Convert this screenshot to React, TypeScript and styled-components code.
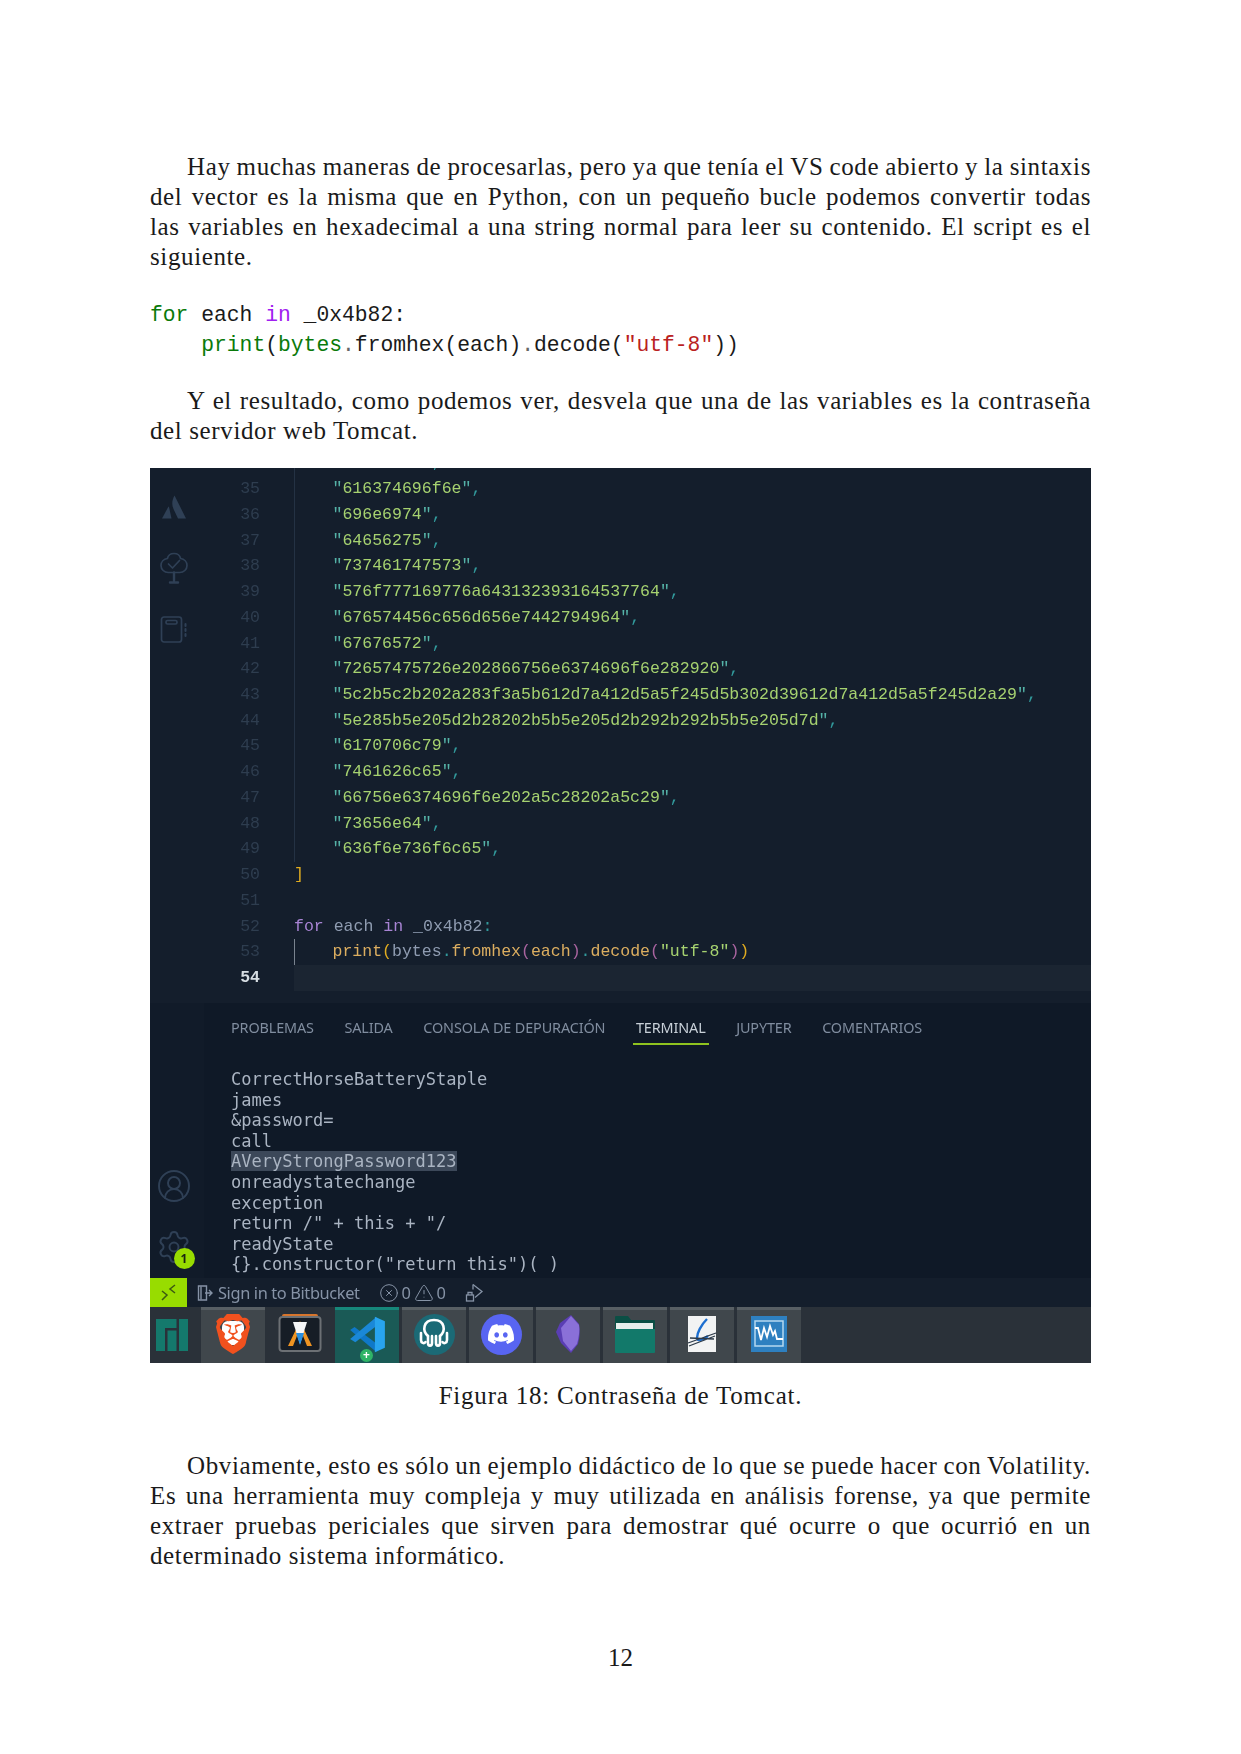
import React from "react";
import styled, { createGlobalStyle } from "styled-components";
import { CircleUserRound, Settings, CircleX, TriangleAlert } from "lucide-react";
import { SiBrave, SiDiscord, SiManjaro } from "react-icons/si";

const Global = createGlobalStyle`
  html, body { margin: 0; padding: 0; background: #fff; }
  * { box-sizing: border-box; }
`;

const Page = styled.main`
  width: 1241px;
  height: 1754px;
  padding: 152px 150px 0;
  background: #fff;
  color: #1a1a1a;
  font-family: "Liberation Serif", serif;
  font-size: 25px;
  overflow: hidden;
`;

const Paragraph = styled.section<{ $top?: number }>`
  margin-top: ${(p) => p.$top ?? 0}px;
`;

const TextLine = styled.div<{ $indent?: boolean; $last?: boolean }>`
  height: 30px;
  line-height: 30px;
  letter-spacing: 0.62px;
  word-spacing: ${(p) => (p.$last ? 0 : -2.5)}px;
  text-align: ${(p) => (p.$last ? "left" : "justify")};
  text-align-last: ${(p) => (p.$last ? "left" : "justify")};
  padding-left: ${(p) => (p.$indent ? 37 : 0)}px;
`;

const Listing = styled.pre`
  margin: 28px 0 0;
  font-family: "Liberation Mono", monospace;
  font-size: 21.33px;
  line-height: 30px;
  color: #1a1a1a;
`;

const Tok = styled.span<{ $c: string }>`
  color: ${(p) => p.$c};
`;

const Caption = styled.div`
  margin-top: 18px;
  height: 30px;
  line-height: 30px;
  text-align: center;
  letter-spacing: 0.78px;
`;

const PageNumber = styled.div`
  margin-top: 72px;
  height: 30px;
  line-height: 30px;
  text-align: center;
`;

/* ---------- screenshot ---------- */

const Shot = styled.figure`
  margin: 22px 0 0;
  width: 941px;
  height: 895px;
  display: flex;
  flex-direction: column;
  overflow: hidden;
  background: #141e2c;
  filter: blur(0.45px);
`;

const Workbench = styled.div`
  display: flex;
  height: 810px;
`;

const Activity = styled.nav`
  width: 54px;
  flex: none;
  display: flex;
  flex-direction: column;
  justify-content: space-between;
  padding: 8px 6px 0 0;
  background: linear-gradient(#141e2c 0, #141e2c 66%, #111b29 66%, #111b29 100%);
  color: #2f4056;
`;

const ActivityGroup = styled.div`
  display: flex;
  flex-direction: column;
`;

const ActivitySlot = styled.div`
  position: relative;
  height: 61.5px;
  display: flex;
  align-items: center;
  justify-content: center;
`;

const Badge = styled.span`
  position: absolute;
  left: 23.5px;
  top: 31.5px;
  width: 21px;
  height: 21px;
  border-radius: 50%;
  background: #98dc00;
  color: #1a2410;
  font: 700 12px/21px "Noto Sans", sans-serif;
  text-align: center;
`;

const Main = styled.div`
  flex: 1;
  min-width: 0;
  display: flex;
  flex-direction: column;
`;

const Editor = styled.div`
  flex: 1;
  min-height: 0;
  overflow: hidden;
  background: #141e2c;
  font-family: "Liberation Mono", monospace;
  font-size: 16.55px;
`;

const EditorInner = styled.div`
  margin-top: -17.6px;
`;

const CodeRow = styled.div`
  display: flex;
  height: 25.74px;
  line-height: 25.74px;
  white-space: pre;
`;

const LineNo = styled.span<{ $active?: boolean }>`
  width: 56px;
  flex: none;
  text-align: right;
  color: ${(p) => (p.$active ? "#d6dde2" : "#2e3d4f")};
  font-weight: ${(p) => (p.$active ? 700 : 400)};
`;

const CodeCell = styled.span<{ $guide?: string; $active?: boolean; $indent?: boolean }>`
  flex: 1;
  margin-left: 34px;
  padding-left: ${(p) => (p.$indent ? 37.5 : 0)}px;
  border-left: ${(p) => (p.$guide ? `1.5px solid ${p.$guide}` : "0")};
  background: ${(p) => (p.$active ? "#1b2532" : "transparent")};
`;

const Panel = styled.div`
  height: 275px;
  flex: none;
  background: #0f1927;
`;

const TabBar = styled.div`
  display: flex;
  gap: 24.6px;
  padding-left: 24px;
`;

const PanelTab = styled.div<{ $active?: boolean }>`
  height: 42px;
  padding: 15px 3px 5px;
  line-height: 20px;
  font-family: "Noto Sans", sans-serif;
  font-size: 14.4px;
  letter-spacing: -0.12px;
  white-space: nowrap;
  color: ${(p) => (p.$active ? "#c8d0d8" : "#808d9f")};
  border-bottom: 2px solid ${(p) => (p.$active ? "#8fc31f" : "transparent")};
`;

const Terminal = styled.pre`
  margin: 24px 0 0 27px;
  font-family: "DejaVu Sans Mono", monospace;
  font-size: 17.05px;
  line-height: 20.6px;
  color: #aab4c2;
`;

const Selected = styled.span`
  background: #3c4859;
`;

const StatusBar = styled.div`
  height: 29px;
  flex: none;
  display: flex;
  align-items: center;
  background: #141e2c;
  color: #8693a6;
  font-family: "Noto Sans", sans-serif;
  font-size: 16.4px;
  letter-spacing: -0.38px;
`;

const Remote = styled.div`
  width: 37px;
  height: 29px;
  display: flex;
  align-items: center;
  justify-content: center;
  background: #98dc00;
`;

const StatusItem = styled.div<{ $left: number; $gap?: number }>`
  display: flex;
  align-items: center;
  margin-left: ${(p) => p.$left}px;
  gap: ${(p) => p.$gap ?? 4}px;
  white-space: nowrap;
`;

const Taskbar = styled.div`
  height: 56px;
  flex: none;
  display: flex;
  gap: 3px;
  background: #2a3139;
`;

const StartCell = styled.div`
  width: 48px;
  flex: none;
  display: flex;
  align-items: center;
  justify-content: center;
  padding: 0 5px 0 0;
  color: #14796c;
`;

const TaskItem = styled.div<{ $state: "idle" | "open" | "active" }>`
  position: relative;
  width: 64px;
  flex: none;
  display: flex;
  align-items: center;
  justify-content: center;
  padding-bottom: 5px;
  border-top: 3px solid
    ${(p) => (p.$state === "active" ? "#16877a" : p.$state === "open" ? "#585f64" : "transparent")};
  background: ${(p) => (p.$state === "active" ? "#1a5a56" : p.$state === "open" ? "#40474c" : "transparent")};
`;

const PlusBadge = styled.span`
  position: absolute;
  left: 25px;
  bottom: 1px;
  width: 13px;
  height: 13px;
  border-radius: 50%;
  background: #2fb467;
  color: #fff;
  font: 700 12px/12px "Noto Sans", sans-serif;
  text-align: center;
`;

const Round = styled.span<{ $bg: string }>`
  width: 41px;
  height: 41px;
  border-radius: 50%;
  background: ${(p) => p.$bg};
  display: flex;
  align-items: center;
  justify-content: center;
  color: #fff;
`;

const BraveWrap = styled.span`
  position: relative;
  width: 36px;
  height: 42px;
  display: flex;
  align-items: center;
  justify-content: center;
  color: #f1511e;
`;

const BraveBack = styled.span`
  position: absolute;
  left: 7px;
  top: 8px;
  width: 22px;
  height: 24px;
  background: #fff;
  border-radius: 6px;
`;

const BraveFront = styled.span`
  position: relative;
  display: flex;
`;

/* ---------- drawings ---------- */

const AtlassianMark = () => (
  <svg width="26" height="26" viewBox="0 0 26 26" fill="currentColor">
    <path d="M13.5 1.5 C11 6 10.5 11 12.5 15 L17 24.5 H25 Z" />
    <path d="M7.5 12.5 L1 24.5 H10.5 L8 13 Z" />
  </svg>
);

const TreeCheck = () => (
  <svg width="30" height="32" viewBox="0 0 30 32" fill="none" stroke="currentColor" strokeWidth="1.7" strokeLinejoin="round" strokeLinecap="round">
    <path d="M15 1.5c3.5 0 6 2.2 6.6 5 3.6.5 6.4 3.4 6.4 7 0 4-3.3 7-7.3 7H9.3C5.3 20.500 2 17.500 2 13.500c0-3.600 2.800-6.500 6.400-7C9 3.700 11.500 1.500 15 1.500Z" />
    <path d="M9.500 12l4 4 7-7.500" />
    <path d="M15 20.500v8M11 30.500h8" strokeWidth="2.400" />
  </svg>
);

const NotebookIcon = () => (
  <svg width="28" height="30" viewBox="0 0 28 30" fill="none" stroke="currentColor" strokeWidth="1.700" strokeLinejoin="round">
    <rect x="1.500" y="2" width="20" height="25" rx="2.500" />
    <rect x="6" y="5.500" width="11" height="3.500" rx="1.500" />
    <path d="M25.500 9v2M25.500 14v2M25.500 19v2" strokeLinecap="round" strokeWidth="2" />
  </svg>
);

const RemoteMark = () => (
  <svg width="18" height="18" viewBox="0 0 18 18" fill="none" stroke="#3c5a12" strokeWidth="1.500">
    <path d="M2 7l5 4-5 5" />
    <path d="M15 1l-5 4 5 4" />
  </svg>
);

const DoorIcon = () => (
  <svg width="16" height="18" viewBox="0 0 16 18" fill="none" stroke="currentColor" strokeWidth="1.400">
    <path d="M9.500 2H1.500v14h8z" />
    <path d="M4 2.500v13" />
    <path d="M8 9h7M12 6l3 3-3 3" />
  </svg>
);

const LiveShare = () => (
  <svg width="19" height="20" viewBox="0 0 19 20" fill="none" stroke="currentColor" strokeWidth="1.300">
    <path d="M8 1.500l9 7-7 6" />
    <path d="M8 1.500v5" />
    <rect x="1.500" y="12" width="7" height="6" />
    <path d="M3 12V9.500h4V12" />
  </svg>
);

const LaunchIcon = () => (
  <svg width="44" height="40" viewBox="0 0 44 40">
    <rect x="4" y="0" width="36" height="6" rx="2" fill="#d8752c" />
    <rect x="1.500" y="3" width="41" height="34" rx="3" fill="#161d26" stroke="#6c7074" strokeWidth="2" />
    <path d="M22 7L10 32h5L22 14l7 18h5Z" fill="#ef9422" />
    <path d="M15 8h14L22 30Z" fill="#f4f6f8" />
    <path d="M18 19h8L22 31Z" fill="#2a8fe0" />
  </svg>
);

const CodeLogo = () => (
  <svg width="37" height="37" viewBox="0 0 100 100">
    <path d="M3 38 L15 30 L74 74 V97 Z" fill="#0f78c8" />
    <path d="M74 3 V27 L17 71 L3 62 Z" fill="#1a88d8" />
    <path d="M70 2 L97 14 V86 L70 98 Z" fill="#28a4ee" />
  </svg>
);

const Octopus = () => (
  <svg width="34" height="34" viewBox="0 0 34 34" fill="none" stroke="#fff" strokeWidth="2.600" strokeLinecap="round">
    <path d="M11 19C5 14 6 3 17 3s12 11 6 16" />
    <path d="M11 19v7c0 3.500 4 3.500 4 0v-7M23 19v7c0 3.500-4 3.500-4 0v-7" />
    <path d="M4 16v7c0 3 3 4 4.500 2M30 16v7c0 3-3 4-4.500 2" />
  </svg>
);

const ObsidianGem = () => (
  <svg width="26" height="40" viewBox="0 0 26 40">
    <path d="M16 1 L24 10 Q26 18 23 30 L16 39 L6 29 L1 18 L5 9 Z" fill="#5a3eb4" />
    <path d="M16 2 L24 11 Q25 20 22 30 L16 37 L8 27 L6 14 Z" fill="#8a70d8" />
  </svg>
);

const FolderIcon = () => (
  <svg width="40" height="37" viewBox="0 0 40 37">
    <path d="M0 1a1 1 0 0 1 1-1h12l3 4h23a1 1 0 0 1 1 1v10H0Z" fill="#0b4f45" />
    <rect x="1" y="7" width="37" height="6" fill="#e8eeec" />
    <path d="M0 13h40v23a1 1 0 0 1-1 1H1a1 1 0 0 1-1-1Z" fill="#12796a" />
  </svg>
);

const ScopeDoc = () => (
  <svg width="30" height="36" viewBox="0 0 30 36">
    <rect x="1" y="0" width="28" height="36" fill="#f2f3f3" />
    <path d="M20 3c-6 6-10 14-10 19 0 3 5 3 11-2" fill="none" stroke="#1d6fd0" strokeWidth="2.400" />
    <path d="M1 27L29 17M3 22l24 1M2 30L28 20" stroke="#2d3a48" strokeWidth="1.300" />
  </svg>
);

const WaveDoc = () => (
  <svg width="36" height="36" viewBox="0 0 36 36">
    <rect width="36" height="36" fill="#2e80c0" />
    <rect x="4" y="5" width="28" height="25" fill="none" stroke="#b5d8ef" strokeWidth="1.500" />
    <path d="M4 12h3l3 12 3-12 3 9 3-11 3 9 2-4 2 8h6" fill="none" stroke="#fff" strokeWidth="1.800" />
  </svg>
);

/* ---------- data ---------- */

const strings: [number, string][] = [
  [35, "616374696f6e"],
  [36, "696e6974"],
  [37, "64656275"],
  [38, "737461747573"],
  [39, "576f777169776a643132393164537764"],
  [40, "676574456c656d656e7442794964"],
  [41, "67676572"],
  [42, "72657475726e202866756e6374696f6e282920"],
  [43, "5c2b5c2b202a283f3a5b612d7a412d5a5f245d5b302d39612d7a412d5a5f245d2a29"],
  [44, "5e285b5e205d2b28202b5b5e205d2b292b292b5b5e205d7d"],
  [45, "6170706c79"],
  [46, "7461626c65"],
  [47, "66756e6374696f6e202a5c28202a5c29"],
  [48, "73656e64"],
  [49, "636f6e736f6c65"],
];

const C = {
  str: "#a6d270",
  quote: "#55b3a8",
  punct: "#329a9c",
  plain: "#8f9cb1",
  kw: "#a884d4",
  fn: "#dcae60",
  yellow: "#e0ac20",
  purple: "#a8649f",
};

const StringLit = ({ text }: { text: string }) => (
  <>
    <Tok $c={C.quote}>"</Tok>
    <Tok $c={C.str}>{text}</Tok>
    <Tok $c={C.quote}>"</Tok>
    <Tok $c={C.punct}>,</Tok>
  </>
);

const guide = "#243244";

const terminal = [
  "CorrectHorseBatteryStaple",
  "james",
  "&password=",
  "call",
  null,
  "onreadystatechange",
  "exception",
  'return /" + this + "/',
  "readyState",
  '{}.constructor("return this")( )',
];

const tabs = ["PROBLEMAS", "SALIDA", "CONSOLA DE DEPURACIÓN", "TERMINAL", "JUPYTER", "COMENTARIOS"];

export default function App() {
  return (
    <>
      <Global />
      <Page>
        <Paragraph>
          <TextLine $indent>Hay muchas maneras de procesarlas, pero ya que tenía el VS code abierto y la sintaxis</TextLine>
          <TextLine>del vector es la misma que en Python, con un pequeño bucle podemos convertir todas</TextLine>
          <TextLine>las variables en hexadecimal a una string normal para leer su contenido. El script es el</TextLine>
          <TextLine $last>siguiente.</TextLine>
        </Paragraph>

        <Listing>
          <Tok $c="#0a7a0a">for</Tok> each <Tok $c="#a020f0">in</Tok> _0x4b82:{"\n"}
          {"    "}
          <Tok $c="#0a7a0a">print</Tok>(<Tok $c="#0a7a0a">bytes</Tok>
          <Tok $c="#666">.</Tok>fromhex(each)<Tok $c="#666">.</Tok>decode(<Tok $c="#ba2121">"utf-8"</Tok>))
        </Listing>

        <Paragraph $top={26}>
          <TextLine $indent>Y el resultado, como podemos ver, desvela que una de las variables es la contraseña</TextLine>
          <TextLine $last>del servidor web Tomcat.</TextLine>
        </Paragraph>

        <Shot>
          <Workbench>
            <Activity>
              <ActivityGroup>
                <ActivitySlot><AtlassianMark /></ActivitySlot>
                <ActivitySlot><TreeCheck /></ActivitySlot>
                <ActivitySlot><NotebookIcon /></ActivitySlot>
              </ActivityGroup>
              <ActivityGroup>
                <ActivitySlot><CircleUserRound size={36} strokeWidth={1.3} /></ActivitySlot>
                <ActivitySlot>
                  <Settings size={36} strokeWidth={1.3} />
                  <Badge>1</Badge>
                </ActivitySlot>
              </ActivityGroup>
            </Activity>
            <Main>
              <Editor>
                <EditorInner>
                  <CodeRow>
                    <LineNo>34</LineNo>
                    <CodeCell $guide={guide} $indent><StringLit text="63616c6c" /></CodeCell>
                  </CodeRow>
                  {strings.map(([n, s]) => (
                    <CodeRow key={n}>
                      <LineNo>{n}</LineNo>
                      <CodeCell $guide={guide} $indent><StringLit text={s} /></CodeCell>
                    </CodeRow>
                  ))}
                  <CodeRow>
                    <LineNo>50</LineNo>
                    <CodeCell><Tok $c={C.yellow}>]</Tok></CodeCell>
                  </CodeRow>
                  <CodeRow>
                    <LineNo>51</LineNo>
                    <CodeCell />
                  </CodeRow>
                  <CodeRow>
                    <LineNo>52</LineNo>
                    <CodeCell>
                      <Tok $c={C.kw}>for</Tok>
                      <Tok $c={C.plain}> each </Tok>
                      <Tok $c={C.kw}>in</Tok>
                      <Tok $c={C.plain}> _0x4b82</Tok>
                      <Tok $c={C.punct}>:</Tok>
                    </CodeCell>
                  </CodeRow>
                  <CodeRow>
                    <LineNo>53</LineNo>
                    <CodeCell $guide="#79838f" $indent>
                      <Tok $c={C.fn}>print</Tok>
                      <Tok $c={C.yellow}>(</Tok>
                      <Tok $c={C.plain}>bytes</Tok>
                      <Tok $c={C.punct}>.</Tok>
                      <Tok $c={C.fn}>fromhex</Tok>
                      <Tok $c={C.purple}>(</Tok>
                      <Tok $c={C.fn}>each</Tok>
                      <Tok $c={C.purple}>)</Tok>
                      <Tok $c={C.punct}>.</Tok>
                      <Tok $c={C.fn}>decode</Tok>
                      <Tok $c={C.purple}>(</Tok>
                      <Tok $c={C.str}>"utf-8"</Tok>
                      <Tok $c={C.purple}>)</Tok>
                      <Tok $c={C.yellow}>)</Tok>
                    </CodeCell>
                  </CodeRow>
                  <CodeRow>
                    <LineNo $active>54</LineNo>
                    <CodeCell $active />
                  </CodeRow>
                </EditorInner>
              </Editor>
              <Panel>
                <TabBar>
                  {tabs.map((t) => (
                    <PanelTab key={t} $active={t === "TERMINAL"}>{t}</PanelTab>
                  ))}
                </TabBar>
                <Terminal>
                  {terminal.map((l, i) =>
                    l === null ? (
                      <React.Fragment key={i}>
                        <Selected>AVeryStrongPassword123</Selected>
                        {"\n"}
                      </React.Fragment>
                    ) : (
                      <React.Fragment key={i}>{l + "\n"}</React.Fragment>
                    )
                  )}
                </Terminal>
              </Panel>
            </Main>
          </Workbench>
          <StatusBar>
            <Remote><RemoteMark /></Remote>
            <StatusItem $left={10} $gap={5}><DoorIcon />Sign in to Bitbucket</StatusItem>
            <StatusItem $left={19} $gap={3}>
              <CircleX size={20} strokeWidth={1.2} />0
              <TriangleAlert size={20} strokeWidth={1.2} />0
            </StatusItem>
            <StatusItem $left={19}><LiveShare /></StatusItem>
          </StatusBar>
          <Taskbar>
            <StartCell><SiManjaro size={32} /></StartCell>
            <TaskItem $state="open">
              <BraveWrap>
                <BraveBack />
                <BraveFront><SiBrave size={40} /></BraveFront>
              </BraveWrap>
            </TaskItem>
            <TaskItem $state="idle"><LaunchIcon /></TaskItem>
            <TaskItem $state="active">
              <CodeLogo />
              <PlusBadge>+</PlusBadge>
            </TaskItem>
            <TaskItem $state="open"><Round $bg="#1b6a76"><Octopus /></Round></TaskItem>
            <TaskItem $state="open"><Round $bg="#5865f2"><SiDiscord size={26} /></Round></TaskItem>
            <TaskItem $state="open"><ObsidianGem /></TaskItem>
            <TaskItem $state="open"><FolderIcon /></TaskItem>
            <TaskItem $state="open"><ScopeDoc /></TaskItem>
            <TaskItem $state="open"><WaveDoc /></TaskItem>
          </Taskbar>
        </Shot>

        <Caption>Figura 18: Contraseña de Tomcat.</Caption>

        <Paragraph $top={40}>
          <TextLine $indent>Obviamente, esto es sólo un ejemplo didáctico de lo que se puede hacer con Volatility.</TextLine>
          <TextLine>Es una herramienta muy compleja y muy utilizada en análisis forense, ya que permite</TextLine>
          <TextLine>extraer pruebas periciales que sirven para demostrar qué ocurre o que ocurrió en un</TextLine>
          <TextLine $last>determinado sistema informático.</TextLine>
        </Paragraph>

        <PageNumber>12</PageNumber>
      </Page>
    </>
  );
}
